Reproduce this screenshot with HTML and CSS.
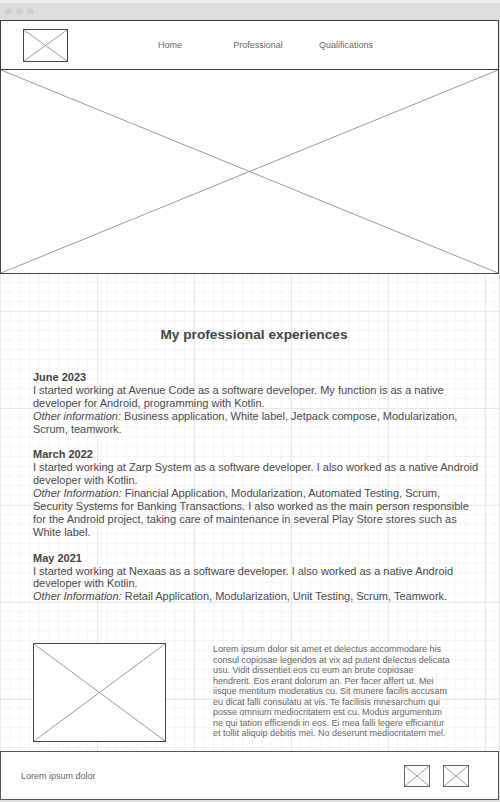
FILE: index.html
```html
<!DOCTYPE html>
<html lang="en">
<head>
<meta charset="utf-8">
<title>Professional experiences</title>
<link rel="stylesheet" href="styles.css">
</head>
<body>
<div class="chrome">
  <span class="dot"></span><span class="dot"></span><span class="dot"></span>
</div>
<div class="page">
  <header class="header">
    <div class="logo">
      <svg class="xbox" viewBox="0 0 100 100" preserveAspectRatio="none"><line x1="0" y1="0" x2="100" y2="100"/><line x1="100" y1="0" x2="0" y2="100"/></svg>
    </div>
    <nav class="nav">
      <a class="nav-link">Home</a>
      <a class="nav-link">Professional</a>
      <a class="nav-link">Qualifications</a>
    </nav>
  </header>
  <section class="hero">
    <svg class="xbox" viewBox="0 0 100 100" preserveAspectRatio="none"><line x1="0" y1="0" x2="100" y2="100"/><line x1="100" y1="0" x2="0" y2="100"/></svg>
  </section>
  <main class="content">
    <h1 class="title">My professional experiences</h1>
    <div class="entries">
      <div class="entry">
        <div class="date">June 2023</div>
        <p class="text">I started working at Avenue Code as a software developer. My function is as a native developer for Android, programming with Kotlin.</p>
        <p class="text"><em>Other information:</em> Business application, White label, Jetpack compose, Modularization, Scrum, teamwork.</p>
      </div>
      <div class="entry">
        <div class="date">March 2022</div>
        <p class="text">I started working at Zarp System as a software developer. I also worked as a native Android developer with Kotlin.</p>
        <p class="text"><em>Other Information:</em> Financial Application, Modularization, Automated Testing, Scrum, Security Systems for Banking Transactions. I also worked as the main person responsible for the Android project, taking care of maintenance in several Play Store stores such as White label.</p>
      </div>
      <div class="entry">
        <div class="date">May 2021</div>
        <p class="text">I started working at Nexaas as a software developer. I also worked as a native Android developer with Kotlin.</p>
        <p class="text"><em>Other Information:</em> Retail Application, Modularization, Unit Testing, Scrum, Teamwork.</p>
      </div>
    </div>
    <div class="media">
      <div class="media-img">
        <svg class="xbox" viewBox="0 0 100 100" preserveAspectRatio="none"><line x1="0" y1="0" x2="100" y2="100"/><line x1="100" y1="0" x2="0" y2="100"/></svg>
      </div>
      <p class="media-text">Lorem ipsum dolor sit amet et delectus accommodare his consul copiosae legendos at vix ad putent delectus delicata usu. Vidit dissentiet eos cu eum an brute copiosae hendrerit. Eos erant dolorum an. Per facer affert ut. Mei iisque mentitum moderatius cu. Sit munere facilis accusam eu dicat falli consulatu at vis. Te facilisis mnesarchum qui posse omnium mediocritatem est cu. Modus argumentum ne qui tation efficiendi in eos. Ei mea falli legere efficiantur et tollit aliquip debitis mei. No deserunt mediocritatem mel.</p>
    </div>
  </main>
  <footer class="footer">
    <span class="footer-text">Lorem ipsum dolor</span>
    <div class="footer-icons">
      <span class="icon"><svg class="xbox" viewBox="0 0 100 100" preserveAspectRatio="none"><line x1="0" y1="0" x2="100" y2="100"/><line x1="100" y1="0" x2="0" y2="100"/></svg></span>
      <span class="icon"><svg class="xbox" viewBox="0 0 100 100" preserveAspectRatio="none"><line x1="0" y1="0" x2="100" y2="100"/><line x1="100" y1="0" x2="0" y2="100"/></svg></span>
    </div>
  </footer>
</div>
</body>
</html>
```
FILE: styles.css
```css
* { box-sizing: border-box; }
html, body { margin: 0; padding: 0; }
body {
  width: 500px;
  height: 802px;
  overflow: hidden;
  font-family: "Liberation Sans", Arial, sans-serif;
  color: #4a4a4a;
  background: #e2e2e2;
}
.chrome {
  height: 20px;
  background: linear-gradient(#efefef 0 3px, #dedede 3px);
  display: flex;
  align-items: center;
  gap: 4px;
  padding: 3px 0 0 5px;
}
.dot {
  width: 7px;
  height: 7px;
  border-radius: 50%;
  background: #d0d0d0;
}
.page {
  width: 499px;
  height: 780px;
  background-color: #fff;
  background-image:
    linear-gradient(to right, #e9e9e9 1px, transparent 1px),
    linear-gradient(to bottom, #e9e9e9 1px, transparent 1px),
    linear-gradient(to right, #f4f4f4 1px, transparent 1px),
    linear-gradient(to bottom, #f4f4f4 1px, transparent 1px);
  background-size: 97px 97px, 97px 97px, 9.7px 9.7px, 9.7px 9.7px;
  display: flex;
  flex-direction: column;
}
.xbox {
  display: block;
  width: 100%;
  height: 100%;
}
.xbox line {
  stroke: #9a9a9a;
  stroke-width: 1;
  vector-effect: non-scaling-stroke;
}
.header {
  height: 50px;
  flex: none;
  border: 1px solid #3c3c3c;
  background: #fff;
  display: flex;
  align-items: center;
  padding-left: 22px;
}
.logo {
  width: 45px;
  height: 33px;
  border: 1px solid #444;
}
.nav {
  display: grid;
  grid-template-columns: repeat(3, 88px);
  margin-left: 58px;
  font-size: 9px;
  color: #666;
  text-align: center;
}
.nav-link { display: block; }
.hero {
  height: 204px;
  flex: none;
  border: 1px solid #444;
  border-top: none;
  background: #fff;
}
.content {
  padding: 52px 0 0 33px;
  flex: 1;
}
.title {
  margin: 0 0 28px;
  font-size: 13.7px;
  line-height: 17px;
  font-weight: bold;
  color: #444;
  text-align: center;
  padding-right: 24px;
}
.entries {
  width: 446px;
  font-size: 11px;
  line-height: 12.9px;
}
.entry { margin-bottom: 12.9px; }
.date { font-weight: bold; color: #444; }
.text { margin: 0; }
.text em { font-style: italic; }
.media {
  display: flex;
  align-items: flex-start;
  margin-top: 40px;
}
.media-img {
  width: 133px;
  height: 99px;
  border: 1px solid #444;
  background: #fff;
  flex: none;
}
.media-text {
  margin: 1px 0 0 47px;
  width: 237px;
  font-size: 9px;
  line-height: 10.5px;
  color: #666;
}
.footer {
  height: 49px;
  flex: none;
  border: 1px solid #555;
  background: #fff;
  display: flex;
  align-items: center;
  justify-content: space-between;
  padding: 0 29px 0 20px;
}
.footer-text {
  font-size: 9px;
  color: #666;
}
.footer-icons {
  display: flex;
  gap: 13px;
}
.icon {
  width: 26px;
  height: 22px;
  border: 1px solid #666;
  display: block;
}
```
